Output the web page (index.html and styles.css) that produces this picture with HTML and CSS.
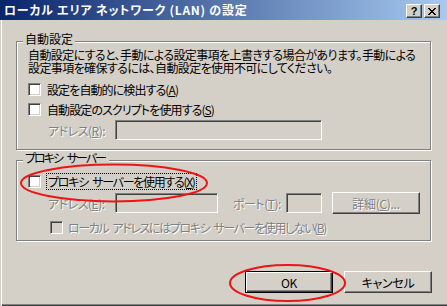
FILE: index.html
```html
<!DOCTYPE html>
<html lang="ja">
<head>
<meta charset="utf-8">
<title>LAN settings</title>
<link rel="stylesheet" href="styles.css">
</head>
<body>
<div class="window">
  <div class="titlebar">
    <span class="title">ローカル エリア ネットワーク (LAN) の設定</span>
    <div class="tbtns">
      <span class="tbtn help">?</span>
      <span class="tbtn close"><svg width="8" height="7" viewBox="0 0 8 7" shape-rendering="crispEdges"><path d="M0 0h2v1H0zM6 0h2v1H6zM1 1h2v1H1zM5 1h2v1H5zM2 2h4v1H2zM3 3h2v1H3zM2 4h4v1H2zM1 5h2v1H1zM5 5h2v1H5zM0 6h2v1H0zM6 6h2v1H6z" fill="#000"/></svg></span>
    </div>
  </div>
  <div class="client">
    <div class="group g1">
      <div class="legend">自動設定</div>
      <p class="desc"><span class="dline">自動設定にすると、手動による設定事項を上書きする場合があります。手動による</span><span class="dline">設定事項を確保するには、自動設定を使用不可にしてください。</span></p>
      <div class="check first"><span class="box"></span><span>設定を自動的に検出する(<u>A</u>)</span></div>
      <div class="check"><span class="box"></span><span>自動設定のスクリプトを使用する(<u>S</u>)</span></div>
      <div class="field"><span class="dis flabel">アドレス(<u>R</u>):</span><span class="input wide"></span></div>
    </div>
    <div class="group g2">
      <div class="legend kana">プロキシ サーバー</div>
      <div class="check proxy"><span class="box"></span><span class="focus">プロキシ サーバーを使用する(<u>X</u>)</span></div>
      <div class="field"><span class="dis flabel">アドレス(<u>E</u>):</span><span class="input addr"></span><span class="dis plabel">ポート(<u>T</u>):</span><span class="input port"></span><span class="btn detail"><span class="dis">詳細(<u>C</u>)...</span></span></div>
      <div class="check sub"><span class="box off"></span><span class="dis narrow">ローカル アドレスにはプロキシ サーバーを使用しない(<u>B</u>)</span></div>
    </div>
    <div class="buttons"><span class="btn default">OK</span><span class="btn">キャンセル</span></div>
  </div>
  <svg class="marks" width="447" height="306" viewBox="0 0 447 306">
    <ellipse cx="114" cy="183" rx="93" ry="18.5" fill="none" stroke="#ee1414" stroke-width="2"/>
    <ellipse cx="287.5" cy="283" rx="57.5" ry="18" fill="none" stroke="#ee1414" stroke-width="2"/>
  </svg>
</div>
</body>
</html>
```

FILE: styles.css
```css
* { box-sizing: border-box; }
html, body { margin: 0; padding: 0; }
body {
  width: 447px;
  height: 306px;
  overflow: hidden;
  background: #D4D0C8;
  font-family: "Noto Sans CJK JP", "Noto Sans", sans-serif;
  font-size: 12px;
  color: #000;
}
.window {
  position: relative;
  width: 447px;
  height: 306px;
  background: #D4D0C8;
  box-shadow: inset 1px 0 #D4D0C8, inset 2px 0 #fff, inset 0 -1px #404040, inset 0 -2px #808080;
}
.titlebar {
  height: 20px;
  display: flex;
  align-items: center;
  justify-content: space-between;
  padding: 0 7px 0 4px;
  background: linear-gradient(to right, #0A246A, #A6CAF0);
}
.title {
  color: #fff;
  font-weight: bold;
  line-height: 14px;
  letter-spacing: 0.75px;
  font-feature-settings: "palt";
}
.tbtns {
  display: flex;
  gap: 2px;
  align-self: flex-end;
  margin-bottom: 2px;
}
.tbtn {
  width: 16px;
  height: 14px;
  display: flex;
  align-items: center;
  justify-content: center;
  background: #D4D0C8;
  border: 1px solid;
  border-color: #fff #404040 #404040 #fff;
  box-shadow: inset -1px -1px #808080;
}
.help {
  font-family: "Liberation Sans", sans-serif;
  font-weight: bold;
  font-size: 11px;
  line-height: 11px;
}
.client {
  padding: 21px 16px 0 16px;
}
.group {
  border: 1px solid #808080;
  box-shadow: inset 1px 1px #fff, 1px 1px #fff;
}
.g1 { height: 109px; }
.g2 { height: 81px; margin-top: 10px; }
.legend {
  display: table;
  margin: -10px 0 0 6px;
  padding: 0 2px;
  background: #D4D0C8;
  line-height: 13px;
  font-feature-settings: "palt";
}
.legend.kana { letter-spacing: -2px; word-spacing: 4px; padding-right: 4px; }
.desc {
  display: flex;
  flex-direction: column;
  margin: 3px 0 0 11px;
  letter-spacing: -0.6px;
  font-feature-settings: "palt";
  white-space: nowrap;
}
.dline {
  display: block;
  height: 13px;
  line-height: 13px;
}
.check {
  display: flex;
  align-items: center;
  height: 20px;
  padding-left: 11px;
  gap: 6px;
  letter-spacing: -0.9px;
  font-feature-settings: "palt";
  white-space: nowrap;
}
.check.first { margin-top: 5px; }
.check.proxy { margin-top: 7px; }
.check.sub { margin-top: 4px; padding-left: 33px; gap: 5px; }
.box {
  flex: none;
  width: 13px;
  height: 13px;
  background: #fff;
  border: 1px solid;
  border-color: #808080 #fff #fff #808080;
  box-shadow: inset 1px 1px #404040, inset -1px -1px #D4D0C8;
}
.box.off { background: #D4D0C8; }
.focus {
  outline: 1px dotted #000;
  outline-offset: 0px;
  padding: 0 1px;
  line-height: 15px;
  letter-spacing: -1.3px;
  word-spacing: 3px;
}
.narrow { letter-spacing: -1.4px; word-spacing: 3px; }
.field {
  display: flex;
  align-items: center;
  height: 20px;
  margin-top: 1px;
  padding-left: 31px;
  letter-spacing: -0.5px;
  font-feature-settings: "palt";
  white-space: nowrap;
}
.g2 .field { margin-top: 2px; }
.flabel { width: 67px; flex: none; }
.dis {
  color: #808080;
  text-shadow: 1px 1px 0 #fff;
}
.input {
  flex: none;
  height: 20px;
  background: #D4D0C8;
  border: 1px solid;
  border-color: #808080 #fff #fff #808080;
  box-shadow: inset 1px 1px #404040, inset -1px -1px #D4D0C8;
}
.wide { width: 207px; }
.addr { width: 103px; }
.plabel { margin-left: 15px; width: 53px; flex: none; }
.port { width: 36px; }
.btn {
  flex: none;
  display: flex;
  align-items: center;
  justify-content: center;
  width: 88px;
  height: 22px;
  background: #D4D0C8;
  border: 1px solid;
  border-color: #fff #404040 #404040 #fff;
  box-shadow: inset -1px -1px #808080;
  letter-spacing: -0.3px;
  font-feature-settings: "palt";
}
.detail { margin-left: 10px; }
.buttons {
  display: flex;
  justify-content: flex-end;
  gap: 11px;
  margin-top: 30px;
  margin-right: -1px;
}
.btn.default {
  border-color: #000;
  box-shadow: inset 1px 1px #fff, inset -1px -1px #404040, inset -2px -2px #808080;
}
.marks {
  position: absolute;
  top: 0;
  left: 0;
  pointer-events: none;
}
```
